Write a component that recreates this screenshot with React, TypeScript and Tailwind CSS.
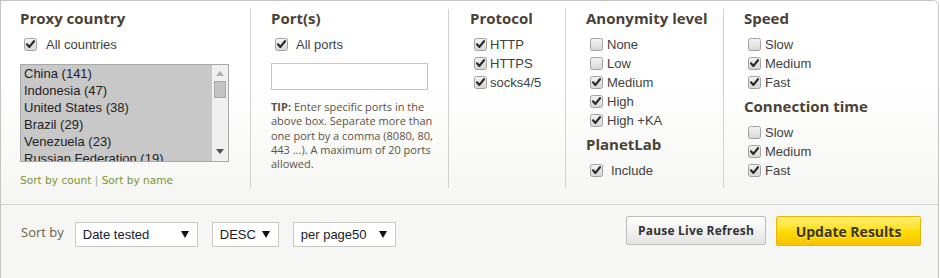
import { useId } from 'react';

const head = "font-['Open_Sans',sans-serif] font-bold text-[15px] leading-[18px] text-[#4b4137]";
const label = "font-['Liberation_Sans',Arial,sans-serif] text-[13px] text-[#3f3f3f]";

function Box({ on }: { on: boolean }) {
  const id = useId();
  return (
    <svg width="13" height="13" viewBox="0 0 13 13" className="shrink-0">
      <defs>
        <linearGradient id={id} x1="0" y1="0" x2="0" y2="1">
          <stop offset="0" stopColor="#f4f4f4" />
          <stop offset="1" stopColor="#d6d6d6" />
        </linearGradient>
      </defs>
      <rect x="0.5" y="0.5" width="12" height="12" rx="2" fill={`url(#${id})`} stroke="#a3a3a3" />
      {on && (
        <path d="M3 6.3l2.4 2.6L10 3.2" fill="none" stroke="#2b2b2b" strokeWidth="2.2" strokeLinecap="round" strokeLinejoin="round" />
      )}
    </svg>
  );
}

function Row({ on, text, gap = 'gap-[4px]' }: { on: boolean; text: string; gap?: string }) {
  return (
    <div className={`flex items-center h-[19px] pl-[4px] ${gap}`}>
      <Box on={on} />
      <span className={label}>{text}</span>
    </div>
  );
}

function Select({ w, text }: { w: string; text: string }) {
  return (
    <div className={`${w} h-[25px] mt-[6px] border border-[#c9c9c9] bg-white flex items-center justify-between pl-[7px] pr-[8px]`}>
      <span className="font-['Liberation_Sans',Arial,sans-serif] text-[13px] text-[#1a1a2a]">{text}</span>
      <svg width="8" height="7" viewBox="0 0 8 7">
        <path d="M0 0h8L4 7z" fill="#111" />
      </svg>
    </div>
  );
}

const countries = ['China (141)', 'Indonesia (47)', 'United States (38)', 'Brazil (29)', 'Venezuela (23)', 'Russian Federation (19)'];

export default function App() {
  return (
    <div className="w-[939px] h-[278px] border-l border-t border-r border-[#c4c4c4] rounded-tr-[6px] overflow-hidden bg-[#f6f6f4]">
      <div className="h-[204px] pt-[8px] border-b border-[#cfcfcf] bg-linear-to-b from-white from-40% to-[#f5f5f3]">
        <div className="flex h-[179px]">
          <div className="w-[249px] pl-[19px]">
            <div className={head}>Proxy country</div>
            <div className="mt-[8px]">
              <Row on text="All countries" gap="gap-[9px]" />
            </div>
            <div className="mt-[10px] w-[209px] h-[98px] border border-[#a8a8a8] flex overflow-hidden">
              <div className="flex-1 bg-[#c8c8c8] pl-[3px] overflow-hidden">
                {countries.map((c) => (
                  <div key={c} className="font-['Liberation_Sans',Arial,sans-serif] text-[13px] leading-[17px] text-[#222] whitespace-nowrap">
                    {c}
                  </div>
                ))}
              </div>
              <div className="w-[16px] bg-[#f0f0f0] flex flex-col items-center">
                <svg width="8" height="5" viewBox="0 0 8 5" className="mt-[6px]">
                  <path d="M0 5h8L4 0z" fill="#b0b0b0" />
                </svg>
                <div className="mt-[5px] w-[12px] h-[17px] bg-[#c3c3c3] border border-[#aaaaaa]" />
                <div className="flex-1" />
                <svg width="8" height="5" viewBox="0 0 8 5" className="mb-[7px]">
                  <path d="M0 0h8L4 5z" fill="#505050" />
                </svg>
              </div>
            </div>
            <div className="mt-[11px] font-['DejaVu_Sans',sans-serif] text-[10.6px] leading-[14px] text-[#7a9633]">
              Sort by count <span className="text-[#9aa]">|</span> Sort by name
            </div>
          </div>

          <div className="w-[198px] pl-[20px] border-l border-[#d2d2d2]">
            <div className={head}>Port(s)</div>
            <div className="mt-[8px]">
              <Row on text="All ports" gap="gap-[8px]" />
            </div>
            <div className="mt-[9px] w-[157px] h-[27px] border border-[#c6c6c6] bg-white" />
            <p className="mt-[10px] w-[162px] font-['Open_Sans',sans-serif] text-[11px] leading-[14.3px] text-[#5e5246]">
              <b>TIP:</b> Enter specific ports in the above box. Separate more than one port by a comma (8080, 80, 443 ...). A maximum of 20 ports allowed.
            </p>
          </div>

          <div className="w-[117px] pl-[21px] border-l border-[#d2d2d2]">
            <div className={head}>Protocol</div>
            <div className="mt-[8px]">
              <Row on text="HTTP" gap="gap-[3px]" />
              <Row on text="HTTPS" gap="gap-[3px]" />
              <Row on text="socks4/5" gap="gap-[3px]" />
            </div>
          </div>

          <div className="w-[158px] pl-[20px] border-l border-[#d2d2d2]">
            <div className={head}>Anonymity level</div>
            <div className="mt-[8px]">
              <Row on={false} text="None" />
              <Row on={false} text="Low" />
              <Row on text="Medium" />
              <Row on text="High" />
              <Row on text="High +KA" />
            </div>
            <div className={`${head} mt-[5px]`}>PlanetLab</div>
            <div className="mt-[8px]">
              <Row on text="Include" gap="gap-[8px]" />
            </div>
          </div>

          <div className="flex-1 pl-[20px] border-l border-[#d2d2d2]">
            <div className={head}>Speed</div>
            <div className="mt-[8px]">
              <Row on={false} text="Slow" />
              <Row on text="Medium" />
              <Row on text="Fast" />
            </div>
            <div className={`${head} mt-[5px]`}>Connection time</div>
            <div className="mt-[8px]">
              <Row on={false} text="Slow" />
              <Row on text="Medium" />
              <Row on text="Fast" />
            </div>
          </div>
        </div>
      </div>

      <div className="flex items-start pt-[11px] pl-[20px] pr-[17px]">
        <span className="mt-[7px] font-['Open_Sans',sans-serif] text-[13px] leading-[18px] text-[#6b5d4f]">Sort by</span>
        <div className="ml-[11px]">
          <Select w="w-[123px]" text="Date tested" />
        </div>
        <div className="ml-[14px]">
          <Select w="w-[67px]" text="DESC" />
        </div>
        <div className="ml-[14px]">
          <Select w="w-[103px]" text="per page50" />
        </div>
        <div className="flex-1" />
        <button className="w-[140px] h-[29px] border border-[#bdbdbd] rounded-[2px] bg-linear-to-b from-white to-[#e4e4e4] font-['Open_Sans',sans-serif] font-bold text-[12px] tracking-[0.2px] text-[#333]">
          Pause Live Refresh
        </button>
        <button className="ml-[10px] w-[145px] h-[30px] border border-[#e7b50d] rounded-[2px] bg-linear-to-b from-[#fff06a] via-[#ffdd00] to-[#f5c400] font-['Open_Sans',sans-serif] font-bold text-[14px] text-[#3a3420] [text-shadow:0_1px_0_rgba(255,255,255,0.5)]">
          Update Results
        </button>
      </div>
    </div>
  );
}
